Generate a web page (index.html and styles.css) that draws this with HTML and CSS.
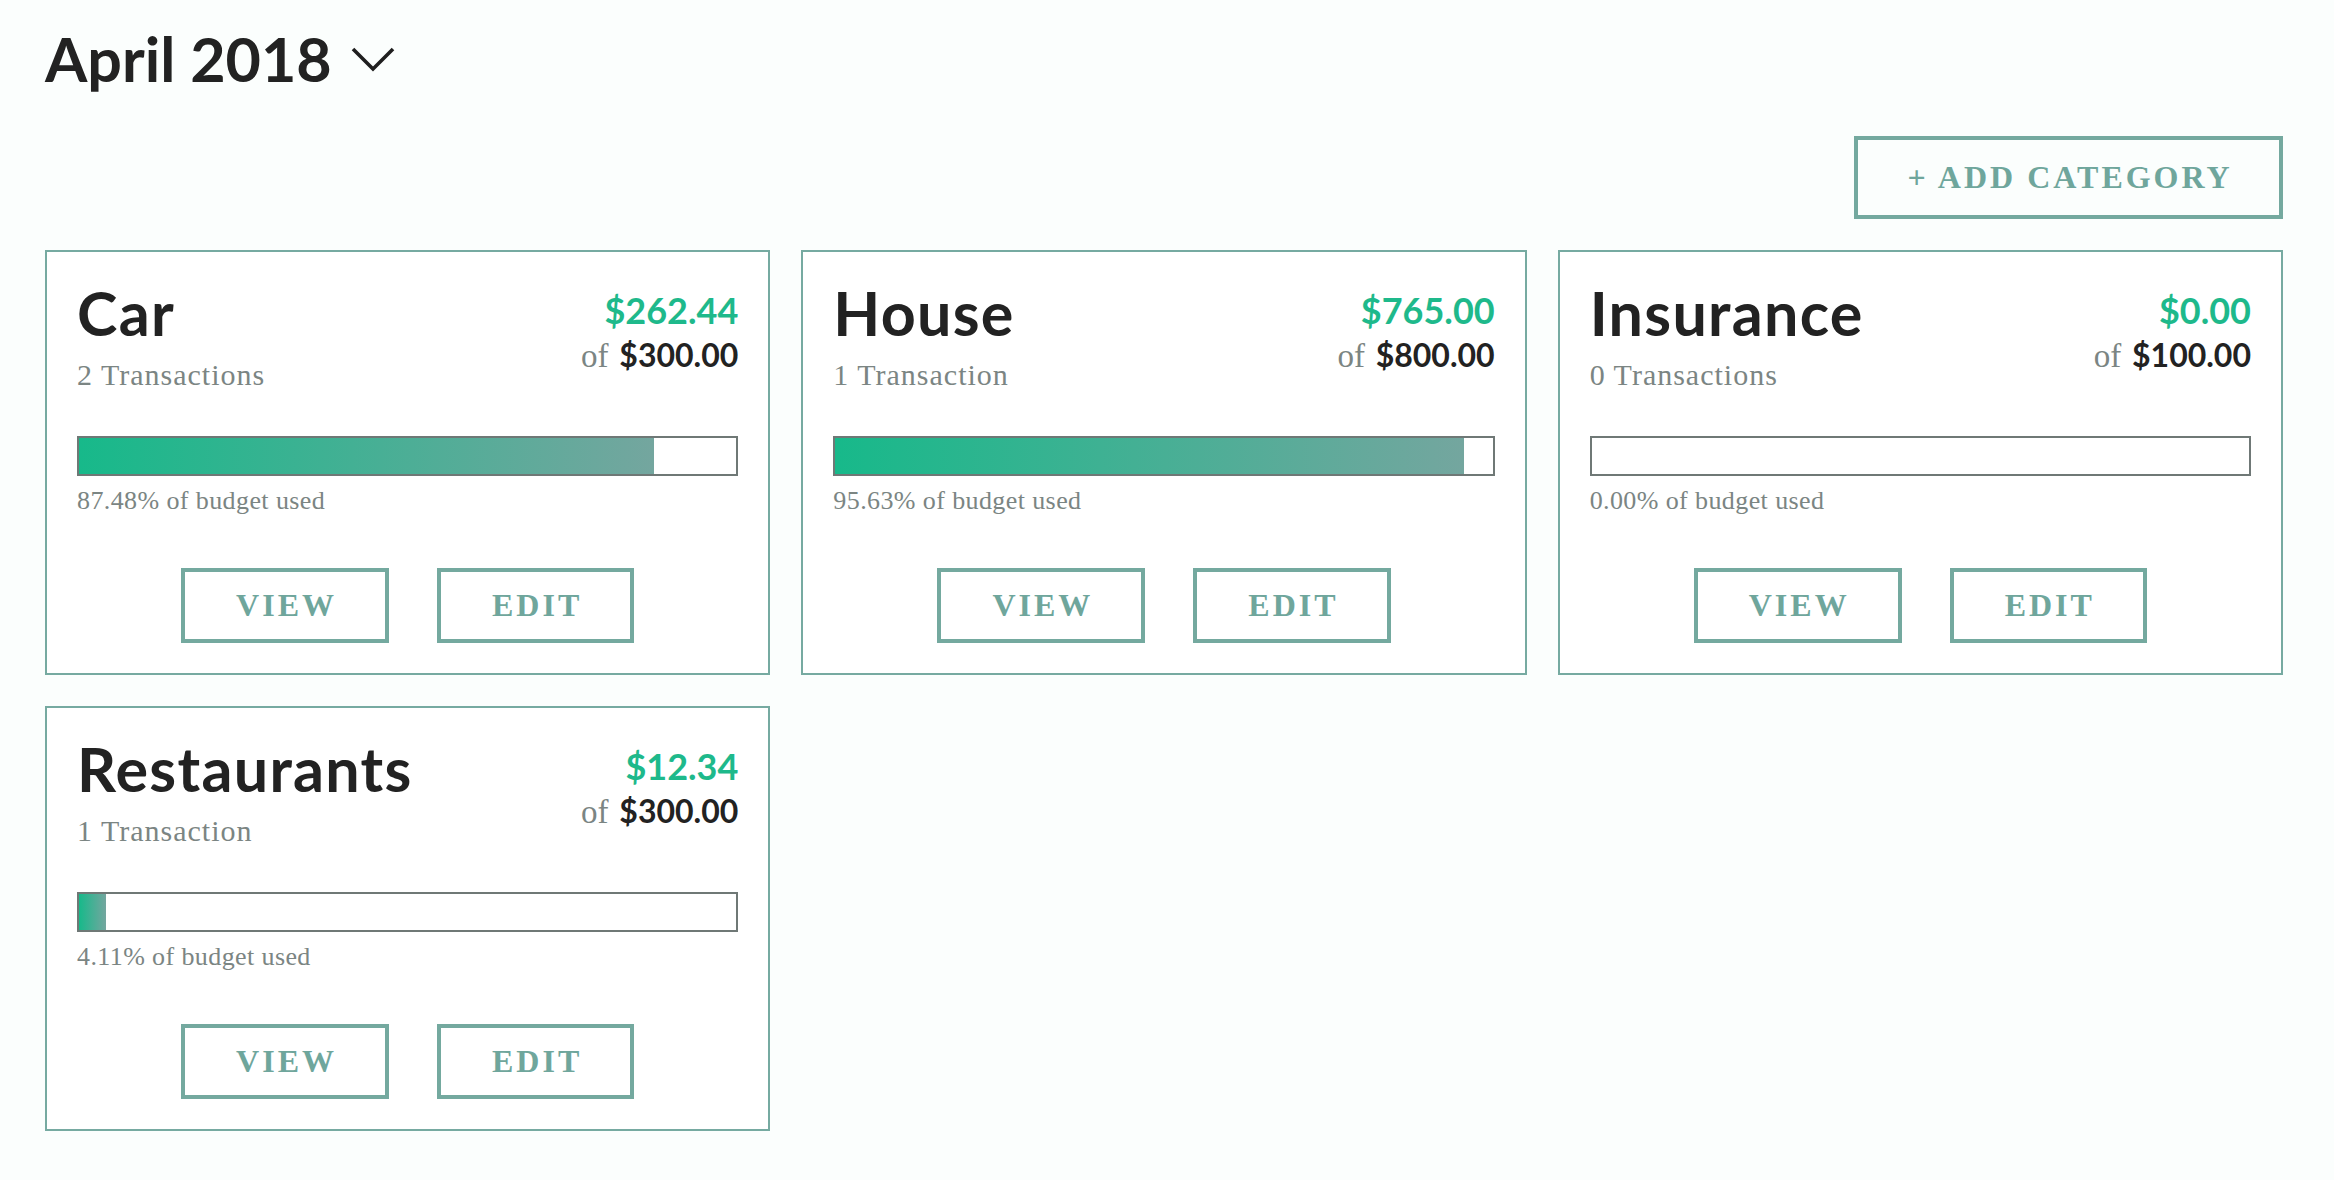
FILE: index.html
```html
<!DOCTYPE html>
<html lang="en">
<head>
<meta charset="utf-8">
<title>Budget - April 2018</title>
<link rel="stylesheet" href="styles.css">
</head>
<body>
<main class="page">
  <header class="month">
    <h1 class="month-title">April 2018</h1>
    <svg class="chevron" width="44" height="28" viewBox="0 0 44 28" aria-hidden="true"><polyline points="2,3 22,23 42,3" fill="none" stroke="#1f1f1f" stroke-width="3.6"/></svg>
  </header>

  <div class="toolbar">
    <button class="btn btn-add">+ ADD CATEGORY</button>
  </div>

  <section class="grid">
    <article class="card">
      <div class="card-head">
        <div class="card-name">
          <h2 class="name">Car</h2>
          <p class="count">2 Transactions</p>
        </div>
        <div class="card-amount">
          <div class="spent">$262.44</div>
          <div class="budget"><span class="of">of</span> $300.00</div>
        </div>
      </div>
      <div class="bar"><div class="fill" style="width: 87.48%"></div></div>
      <p class="used">87.48% of budget used</p>
      <div class="actions">
        <button class="btn btn-view">VIEW</button>
        <button class="btn btn-edit">EDIT</button>
      </div>
    </article>

    <article class="card">
      <div class="card-head">
        <div class="card-name">
          <h2 class="name">House</h2>
          <p class="count">1 Transaction</p>
        </div>
        <div class="card-amount">
          <div class="spent">$765.00</div>
          <div class="budget"><span class="of">of</span> $800.00</div>
        </div>
      </div>
      <div class="bar"><div class="fill" style="width: 95.63%"></div></div>
      <p class="used">95.63% of budget used</p>
      <div class="actions">
        <button class="btn btn-view">VIEW</button>
        <button class="btn btn-edit">EDIT</button>
      </div>
    </article>

    <article class="card">
      <div class="card-head">
        <div class="card-name">
          <h2 class="name">Insurance</h2>
          <p class="count">0 Transactions</p>
        </div>
        <div class="card-amount">
          <div class="spent">$0.00</div>
          <div class="budget"><span class="of">of</span> $100.00</div>
        </div>
      </div>
      <div class="bar"><div class="fill" style="width: 0%"></div></div>
      <p class="used">0.00% of budget used</p>
      <div class="actions">
        <button class="btn btn-view">VIEW</button>
        <button class="btn btn-edit">EDIT</button>
      </div>
    </article>

    <article class="card">
      <div class="card-head">
        <div class="card-name">
          <h2 class="name">Restaurants</h2>
          <p class="count">1 Transaction</p>
        </div>
        <div class="card-amount">
          <div class="spent">$12.34</div>
          <div class="budget"><span class="of">of</span> $300.00</div>
        </div>
      </div>
      <div class="bar"><div class="fill" style="width: 4.11%"></div></div>
      <p class="used">4.11% of budget used</p>
      <div class="actions">
        <button class="btn btn-view">VIEW</button>
        <button class="btn btn-edit">EDIT</button>
      </div>
    </article>
  </section>
</main>
</body>
</html>
```

FILE: styles.css
```css
* { box-sizing: border-box; }

html, body {
  margin: 0;
  padding: 0;
  background: #fbfefd;
}

body {
  font-family: "Lato", "Liberation Sans", sans-serif;
  color: #222222;
}

.page {
  padding: 28px 51px 40px 45px;
}

.month {
  display: flex;
  align-items: center;
  gap: 19px;
}

.month-title {
  margin: 0;
  font-family: "Lato", sans-serif;
  font-weight: 700;
  font-size: 61px;
  line-height: 61px;
  color: #222222;
}

.chevron {
  display: block;
  margin-top: 2px;
}

.toolbar {
  display: flex;
  justify-content: flex-end;
  margin-top: 47px;
}

.btn {
  background: transparent;
  border: 4px solid #74a99f;
  color: #6fa69c;
  font-family: "Liberation Serif", serif;
  font-weight: 700;
  font-size: 32px;
  letter-spacing: 3px;
  cursor: pointer;
  display: flex;
  align-items: center;
  justify-content: center;
}

.btn-add {
  height: 83px;
  width: 429px;
  padding: 0 0 0 3px;
  font-size: 32px;
  letter-spacing: 3px;
}

.grid {
  margin-top: 31px;
  display: grid;
  grid-template-columns: repeat(3, 1fr);
  gap: 31px;
}

.card {
  background: #ffffff;
  border: 2px solid #76aaa1;
  padding: 30px 30px 30px 30px;
  display: flex;
  flex-direction: column;
}

.card-head {
  display: flex;
  justify-content: space-between;
  align-items: flex-start;
}

.name {
  margin: 0;
  font-family: "Lato", sans-serif;
  font-weight: 700;
  font-size: 61px;
  line-height: 61px;
  letter-spacing: 1.3px;
  color: #222222;
}

.count {
  margin: 12px 0 0 0;
  font-family: "Liberation Serif", serif;
  font-size: 30px;
  line-height: 40px;
  letter-spacing: 1px;
  color: #7b8583;
}

.card-amount {
  text-align: right;
  margin-top: 10px;
}

.spent {
  font-family: "Lato", sans-serif;
  font-weight: 700;
  font-size: 36px;
  line-height: 36px;
  color: #1eb98b;
}

.budget {
  margin-top: 7px;
  font-family: "Lato", sans-serif;
  font-weight: 700;
  font-size: 32px;
  line-height: 40px;
  color: #222222;
}

.of {
  font-family: "Liberation Serif", serif;
  font-weight: 400;
  font-size: 33px;
  margin-right: 3px;
  color: #7b8583;
}

.bar {
  margin-top: 41px;
  height: 40px;
  border: 2px solid #6f7876;
  background: #ffffff;
}

.fill {
  height: 100%;
  background: linear-gradient(to right, #17b98a, #74a69f);
}

.used {
  margin: 9px 0 0 0;
  font-family: "Liberation Serif", serif;
  font-size: 26px;
  line-height: 32px;
  letter-spacing: 0.4px;
  color: #7b8583;
}

.actions {
  margin-top: 51px;
  display: flex;
  justify-content: center;
  gap: 48px;
}

.btn-view,
.btn-edit {
  height: 75px;
  padding: 0 48px 0 51px;
}
```
